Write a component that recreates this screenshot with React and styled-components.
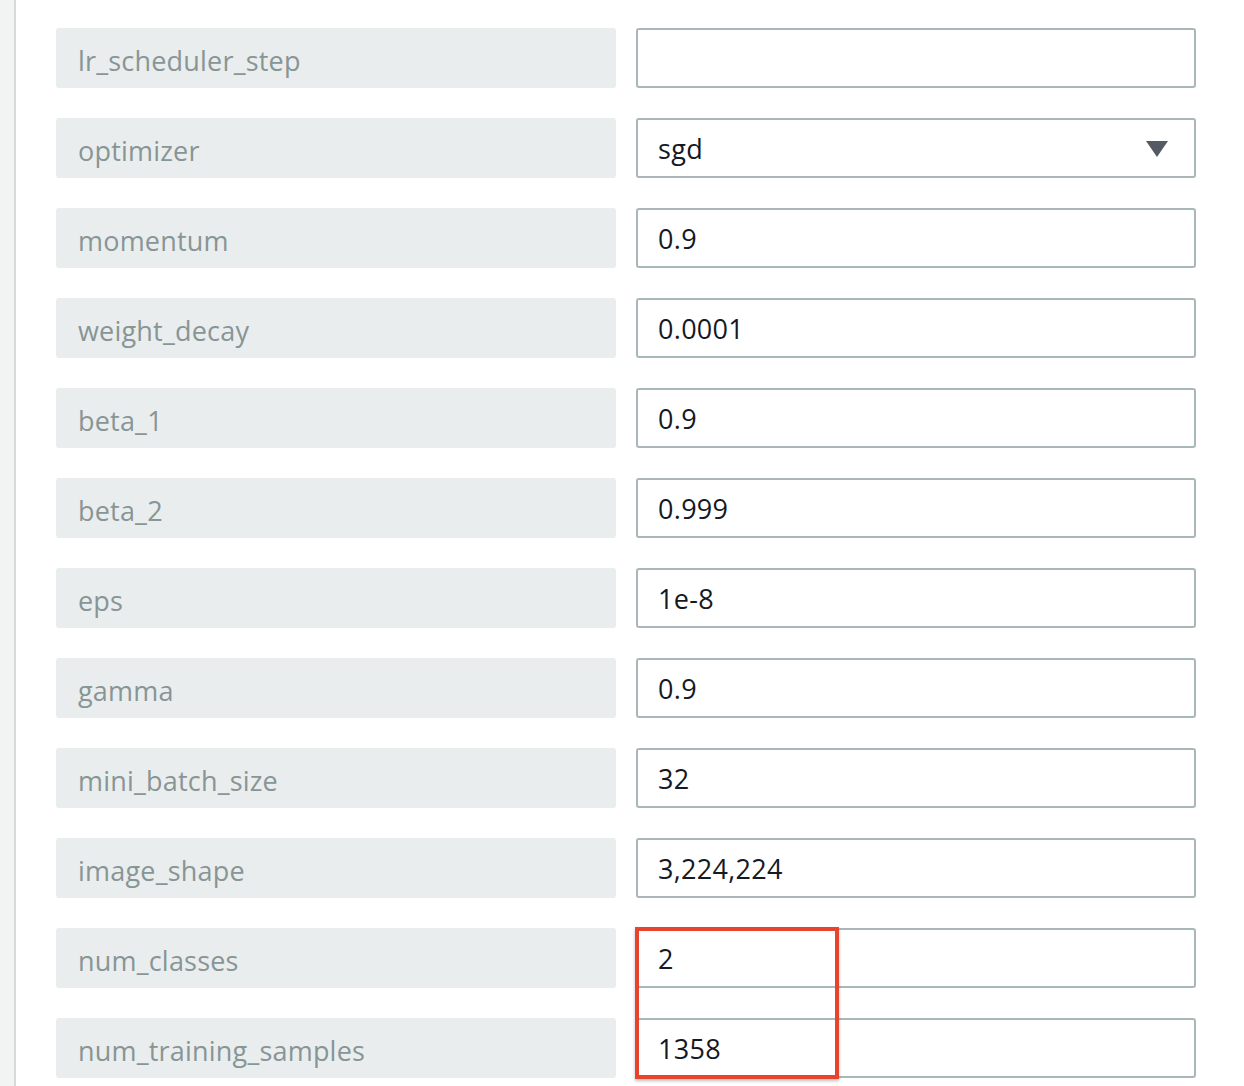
import React from 'react';
import styled, { createGlobalStyle } from 'styled-components';

const GlobalStyle = createGlobalStyle`
  html, body {
    margin: 0;
    padding: 0;
    background: #ffffff;
    font-family: "Open Sans", "Liberation Sans", sans-serif;
  }
`;

const Page = styled.div`
  display: flex;
  min-height: 1086px;
`;

const SideStrip = styled.div`
  width: 14px;
  flex-shrink: 0;
  background: #f2f3f3;
  border-right: 2px solid #d5dbdb;
`;

const Form = styled.div`
  position: relative;
  display: grid;
  grid-template-columns: 560px 560px;
  column-gap: 20px;
  row-gap: 30px;
  padding: 28px 0 0 40px;
  align-content: start;
`;

const Label = styled.div`
  height: 60px;
  box-sizing: border-box;
  display: flex;
  align-items: center;
  padding: 4px 22px 0;
  background: #eaeded;
  border-radius: 3px;
  color: #879596;
  font-size: 27px;
  letter-spacing: 0.2px;
`;

const Field = styled.div`
  position: relative;
  height: 60px;
  box-sizing: border-box;
  display: flex;
  align-items: center;
  padding: 0 20px;
  border: 2px solid #aab7b8;
  border-radius: 3px;
  background: #fff;
  color: #16191f;
  font-size: 27px;
  letter-spacing: 0.3px;
`;

const Caret = styled.span`
  position: absolute;
  right: 26px;
  top: 21px;
  width: 0;
  height: 0;
  border-left: 11px solid transparent;
  border-right: 11px solid transparent;
  border-top: 16px solid #545b64;
`;

const Highlight = styled.div`
  position: absolute;
  left: ${p => p.$left}px;
  top: ${p => p.$top}px;
  width: 204px;
  height: 152px;
  box-sizing: border-box;
  border: 4px solid #e8432c;
  box-shadow: 0 2px 3px rgba(0, 0, 0, 0.25);
  pointer-events: none;
`;

const params = [
  ['lr_scheduler_step', ''],
  ['optimizer', 'sgd', true],
  ['momentum', '0.9'],
  ['weight_decay', '0.0001'],
  ['beta_1', '0.9'],
  ['beta_2', '0.999'],
  ['eps', '1e-8'],
  ['gamma', '0.9'],
  ['mini_batch_size', '32'],
  ['image_shape', '3,224,224'],
  ['num_classes', '2'],
  ['num_training_samples', '1358'],
];

export default function App() {
  return (
    <>
      <GlobalStyle />
      <Page>
        <SideStrip />
        <Form>
          {params.map(([name, value, select]) => (
            <React.Fragment key={name}>
              <Label>{name}</Label>
              <Field>
                {value}
                {select && <Caret />}
              </Field>
            </React.Fragment>
          ))}
          <Highlight $left={619} $top={927} />
        </Form>
      </Page>
    </>
  );
}
